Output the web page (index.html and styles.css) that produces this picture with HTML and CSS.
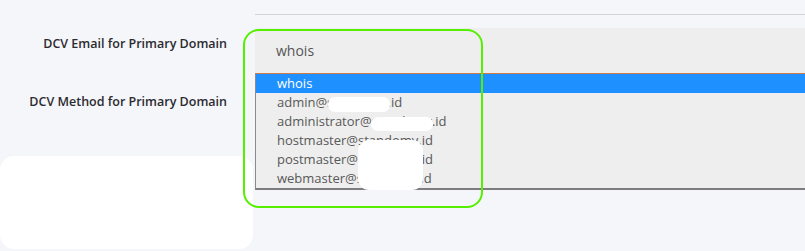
FILE: index.html
```html
<!DOCTYPE html>
<html lang="en">
<head>
<meta charset="utf-8">
<title>DCV settings</title>
<link rel="stylesheet" href="styles.css">
</head>
<body>
<div class="page">
  <div class="rule"></div>
  <div class="form">
    <div class="labels">
      <div class="label label-email">DCV Email for Primary Domain</div>
      <div class="label label-method">DCV Method for Primary Domain</div>
      <div class="card"></div>
    </div>
    <div class="field">
      <div class="select">whois</div>
      <ul class="listbox">
        <li class="option selected">whois</li>
        <li class="option">admin@standomy.id</li>
        <li class="option">administrator@standomy.id</li>
        <li class="option">hostmaster@standomy.id</li>
        <li class="option">postmaster@standomy.id</li>
        <li class="option">webmaster@standomy.id</li>
      </ul>
    </div>
  </div>
  <div class="mask mask-1"></div>
  <div class="mask mask-2"></div>
  <div class="mask mask-3"></div>
  <div class="highlight"></div>
</div>
</body>
</html>
```

FILE: styles.css
```css
html, body {
  margin: 0;
  padding: 0;
  background: #f5f6fa;
  overflow: hidden;
}

.page {
  position: relative;
  width: 805px;
  height: 251px;
  padding-top: 14px;
  box-sizing: border-box;
  font-family: "Open Sans", "Noto Sans", sans-serif;
}

.rule {
  margin-left: 255px;
  border-top: 1px solid #d2d3d6;
}

.form {
  display: grid;
  grid-template-columns: 255px 560px;
  margin-top: 13px;
}

.labels {
  display: flex;
  flex-direction: column;
  align-items: stretch;
}

.label {
  text-align: right;
  padding-right: 28px;
  font-size: 12.5px;
  font-weight: 600;
  line-height: 18px;
  color: #2b2b30;
}

.label-email {
  margin-top: 7px;
}

.label-method {
  margin-top: 40px;
}

.card {
  margin-top: 45px;
  width: 253px;
  height: 93px;
  background: #ffffff;
  border-radius: 14px;
}

.field {
  display: flex;
  flex-direction: column;
}

.select {
  height: 45px;
  background: #eeeeee;
  padding-left: 21px;
  font-size: 14px;
  line-height: 45px;
  color: #555555;
}

.listbox {
  list-style: none;
  margin: 0;
  padding: 0;
  background: #eeeeee;
  border-top: 1px solid #d27a45;
  border-left: 1px solid #8a8a8a;
  border-bottom: 2px solid #7d7d7d;
}

.option {
  height: 19px;
  line-height: 19px;
  padding-left: 21px;
  font-size: 13px;
  color: #585858;
}

.option.selected {
  background: #1e90ff;
  color: #ffffff;
}

.mask {
  position: absolute;
  background: #ffffff;
  border-radius: 7px;
}

.mask-1 {
  left: 328px;
  top: 97px;
  width: 62px;
  height: 15px;
}

.mask-2 {
  left: 371px;
  top: 117px;
  width: 62px;
  height: 14px;
}

.mask-3 {
  left: 358px;
  top: 140px;
  width: 65px;
  height: 50px;
  border-radius: 11px;
}

.highlight {
  position: absolute;
  left: 243px;
  top: 29px;
  width: 240px;
  height: 179px;
  box-sizing: border-box;
  border: 2px solid #55f000;
  border-radius: 16px;
}
```
